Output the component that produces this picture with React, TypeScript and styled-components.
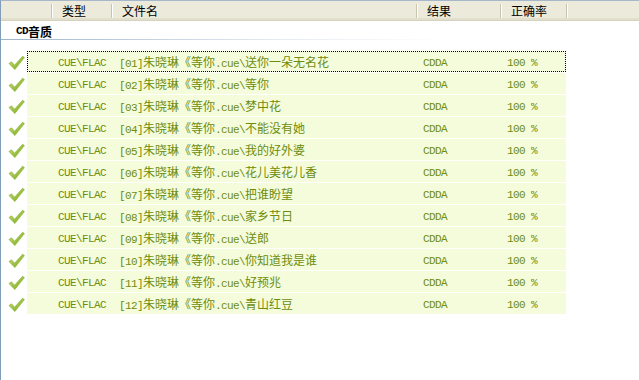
import React from "react";
import styled, { createGlobalStyle } from "styled-components";

const GlobalStyle = createGlobalStyle`
  html, body {
    margin: 0;
    padding: 0;
    background: #ffffff;
    overflow: hidden;
  }
`;

const COLS = "24px 60px 305px 84px 66px";

const Window = styled.div`
  width: 639px;
  height: 380px;
  box-sizing: border-box;
  border-left: 1px solid #7f9db9;
  border-top: 1px solid #a5b7c9;
  background: #ffffff;
  font-family: "Liberation Mono", "Noto Sans CJK SC", monospace;
  display: flex;
  flex-direction: column;
`;

const Header = styled.div`
  height: 19px;
  display: flex;
  background: #ebeadb;
  border-bottom: 1px solid #d5d2c0;
  box-shadow: inset 0 -2px 0 #e2dfcd;
`;

const HeaderCell = styled.div<{ $w: number }>`
  width: ${(p) => p.$w}px;
  flex: ${(p) => (p.$w ? "none" : "1")};
  box-sizing: border-box;
  padding-left: 10px;
  display: flex;
  align-items: center;
  font-family: "Noto Sans CJK SC", sans-serif;
  font-size: 12px;
  color: #000000;
  border-right: 1px solid #c7c5b2;
  box-shadow: 1px 0 0 #ffffff;
  margin: 3px 0 2px 0;
  line-height: 14px;

  &:last-child {
    border-right: none;
    box-shadow: none;
  }
`;

const Group = styled.div`
  height: 18px;
  margin-top: 1px;
  padding-left: 15px;
  display: flex;
  align-items: center;
  background: linear-gradient(to right, #9fb5cc, #e6ecf2 45%, #ffffff 70%) left bottom / 100% 1px no-repeat;
  font-weight: bold;
  color: #000000;
`;

const List = styled.div`
  margin-top: 11px;
  display: flex;
  flex-direction: column;
`;

const Row = styled.div`
  display: flex;
  height: 22px;
`;

const IconCell = styled.div`
  width: 26px;
  display: flex;
  align-items: center;
  padding: 1px 0 0 7px;
  box-sizing: border-box;
`;

const Body = styled.div<{ $focused: boolean }>`
  width: 539px;
  height: 21px;
  box-sizing: border-box;
  display: grid;
  grid-template-columns: ${COLS};
  align-items: center;
  background: #f4fcdc;
  border: 1px dotted ${(p) => (p.$focused ? "#000000" : "transparent")};
  color: #6f8c0c;
`;

const Cell = styled.div<{ $pad: number }>`
  padding-left: ${(p) => p.$pad}px;
  white-space: nowrap;
  line-height: 19px;
`;

const Latin = styled.span`
  font-family: "Liberation Mono", monospace;
  font-size: 11px;
  letter-spacing: -0.6px;
`;

const Cjk = styled.span`
  font-family: "Noto Sans CJK SC", sans-serif;
  font-size: 12px;
`;

const Mixed = ({ text }: { text: string }) => {
  const parts = text.match(/[\u3000-\u9fff\uff00-\uffef]+|[^\u3000-\u9fff\uff00-\uffef]+/g) || [];
  return (
    <>
      {parts.map((p, i) =>
        /[\u3000-\u9fff\uff00-\uffef]/.test(p) ? (
          <Cjk key={i}>{p}</Cjk>
        ) : (
          <Latin key={i}>{p}</Latin>
        )
      )}
    </>
  );
};

const Check = () => (
  <svg width="17" height="16" viewBox="0 0 17 16">
    <defs>
      <linearGradient id="ck" x1="0" y1="0" x2="1" y2="1">
        <stop offset="0" stopColor="#c8e27a" />
        <stop offset="0.6" stopColor="#96be3a" />
        <stop offset="1" stopColor="#6a951c" />
      </linearGradient>
    </defs>
    <path
      d="M1 8.5 L3.5 6.8 L6.6 10.2 L14.6 1.2 L16.4 2.6 L6.8 14.6 Z"
      fill="url(#ck)"
      stroke="#86aa2e"
      strokeWidth="0.6"
      strokeLinejoin="round"
    />
  </svg>
);

const tracks = [
  "送你一朵无名花",
  "等你",
  "梦中花",
  "不能没有她",
  "我的好外婆",
  "花儿美花儿香",
  "把谁盼望",
  "家乡节日",
  "送郎",
  "你知道我是谁",
  "好预兆",
  "青山红豆",
];

const headers: [string, number][] = [
  ["", 51],
  ["类型", 60],
  ["文件名", 305],
  ["结果", 84],
  ["正确率", 66],
  ["", 0],
];

export default function App() {
  return (
    <Window>
      <GlobalStyle />
      <Header>
        {headers.map(([t, w], i) => (
          <HeaderCell key={i} $w={w}>
            {t}
          </HeaderCell>
        ))}
      </Header>
      <Group>
        <Mixed text="CD音质" />
      </Group>
      <List>
        {tracks.map((name, i) => {
          const no = String(i + 1).padStart(2, "0");
          return (
            <Row key={no}>
              <IconCell>
                <Check />
              </IconCell>
              <Body $focused={i === 0}>
                <span />
                <Cell $pad={6}>
                  <Latin>CUE\FLAC</Latin>
                </Cell>
                <Cell $pad={7}>
                  <Mixed text={`[${no}]朱晓琳《等你.cue\\${name}`} />
                </Cell>
                <Cell $pad={6}>
                  <Latin>CDDA</Latin>
                </Cell>
                <Cell $pad={6}>
                  <Latin>100 %</Latin>
                </Cell>
              </Body>
            </Row>
          );
        })}
      </List>
    </Window>
  );
}
